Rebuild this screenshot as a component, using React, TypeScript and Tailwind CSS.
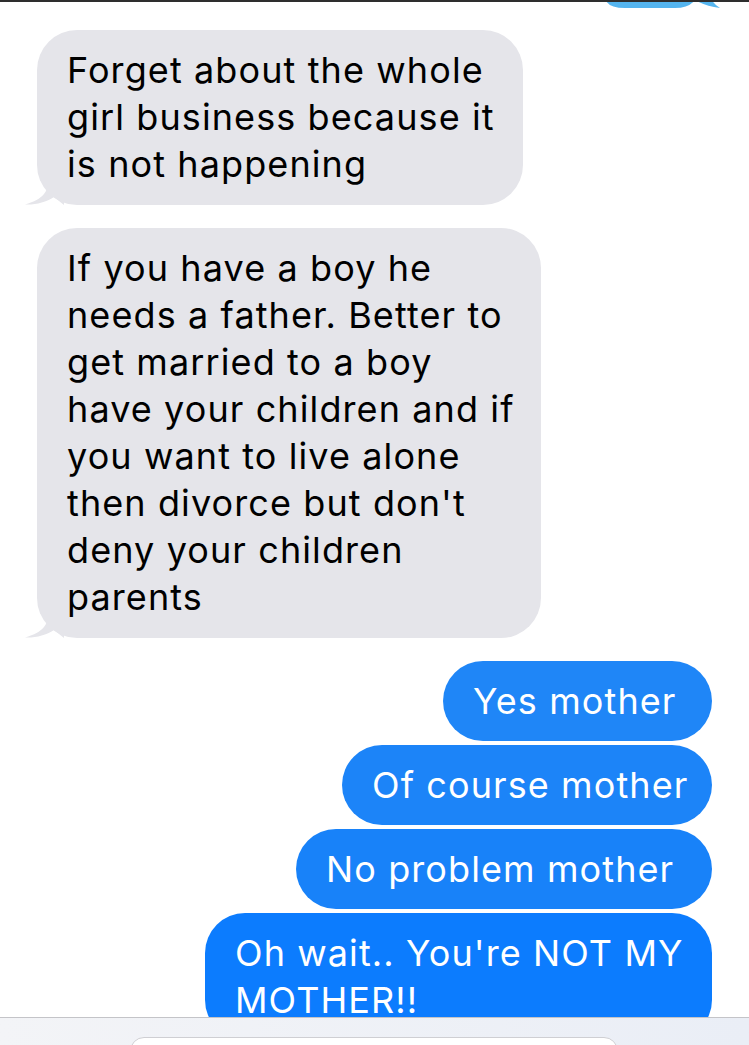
import React from "react";

const grayLines1 = ["Forget about the whole", "girl business because it", "is not happening"];
const grayLines2 = [
  "If you have a boy he",
  "needs a father. Better to",
  "get married to a boy",
  "have your children and if",
  "you want to live alone",
  "then divorce but don't",
  "deny your children",
  "parents",
];

const sent = [
  { text: ["Yes mother"], w: "w-[269px]", bg: "bg-[#1f86f7]" },
  { text: ["Of course mother"], w: "w-[370px]", bg: "bg-[#1c84f8]" },
  { text: ["No problem mother"], w: "w-[416px]", bg: "bg-[#1882f9]" },
  { text: ["Oh wait.. You're NOT MY", "MOTHER!!"], w: "w-[507px]", bg: "bg-[#0c7cfe]" },
];

const GrayTail = () => (
  <svg className="absolute -left-[13px] bottom-0" width="40" height="24" viewBox="0 0 40 24">
    <path d="M24 0 C24 10 20 18 1 23.5 C12 24 22 21 30 16 L40 24 L40 0 Z" fill="#e5e5ea" />
  </svg>
);

const GrayBubble = ({ lines, w }: { lines: string[]; w: string }) => (
  <div className={`relative ${w} rounded-[40px] bg-[#e5e5ea] pl-[30px] py-[17px] text-black`}>
    <GrayTail />
    <div className="relative">
      {lines.map((l, i) => (
        <div key={i} className="whitespace-nowrap">{l}</div>
      ))}
    </div>
  </div>
);

export default function App() {
  return (
    <div
      className="w-[749px] h-[1045px] bg-white flex flex-col overflow-hidden text-[36px] leading-[47px] tracking-[1.1px]"
      style={{ fontFamily: "Inter, 'Liberation Sans', sans-serif" }}
    >
      <div className="h-[1017px] shrink-0 overflow-hidden relative border-t-2 border-[#2e2e2e]">
        {/* bottom of the previous (scrolled off) bubble */}
        <div className="flex justify-end pr-[24px] h-[6px] overflow-hidden">
          <svg width="120" height="6" viewBox="0 0 120 6">
            <path d="M0 -20 L0 -4 Q2 6 20 6 L70 6 Q84 6 90 -2 Q100 4 115 6 Q104 0 100 -20 Z" fill="#55b5ef" />
          </svg>
        </div>

        <div className="pl-[37px] pt-[22px] flex flex-col gap-[23px]">
          <GrayBubble lines={grayLines1} w="w-[486px]" />
          <GrayBubble lines={grayLines2} w="w-[504px]" />
        </div>

        <div className="flex flex-col items-end gap-[4px] pr-[37px] mt-[23px]">
          {sent.map((m, i) => (
            <div key={i} className={`${m.w} ${m.bg} rounded-[40px] pl-[30px] pt-[17px] pb-[16px] text-white`}>
              {m.text.map((l, j) => (
                <div key={j} className="whitespace-nowrap">{l}</div>
              ))}
            </div>
          ))}
        </div>
      </div>

      <div className="flex-1 overflow-hidden border-t border-[#c4c4c8] bg-gradient-to-r from-[#f3f4f7] to-[#eaeef6] pt-[19px] pl-[130px]">
        <div className="w-[488px] h-[20px] bg-white border border-[#cfcfd3] rounded-t-[14px]" />
      </div>
    </div>
  );
}
